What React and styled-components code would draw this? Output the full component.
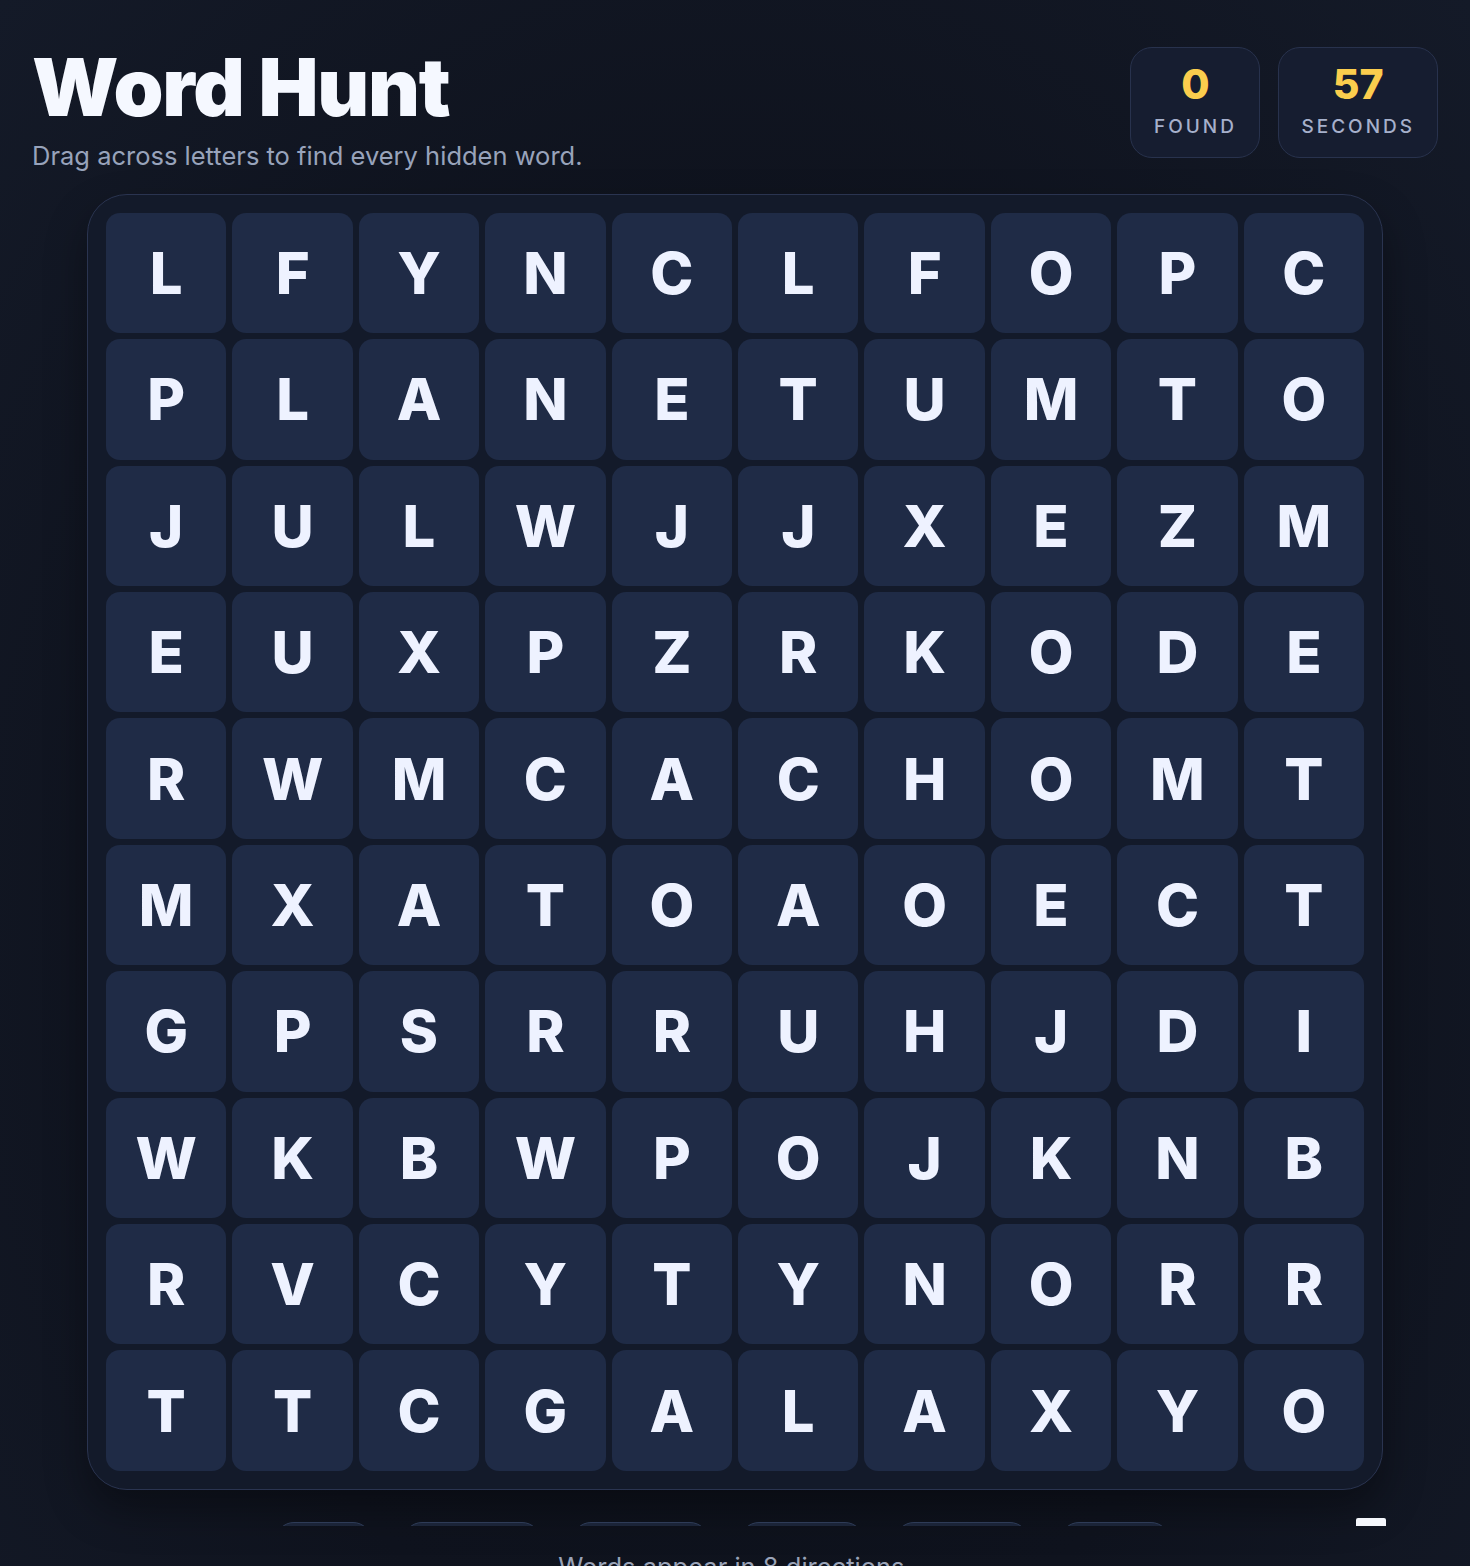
import React from "react";
import styled, { createGlobalStyle } from "styled-components";

const GlobalStyle = createGlobalStyle`
  * { box-sizing: border-box; }
  html, body { margin: 0; padding: 0; }
  body {
    background: radial-gradient(ellipse at 50% 60%, #0c1019 0%, #0f131e 55%, #141a28 100%);
    background-color: #0f131e;
    min-height: 1566px;
    font-family: Inter, "Noto Sans", sans-serif;
    color: #f1f5ff;
    overflow: hidden;
  }
`;

const Page = styled.div`
  padding: 47px 32px 0 32px;
  display: flex;
  flex-direction: column;
`;

const Header = styled.header`
  display: flex;
  justify-content: space-between;
  align-items: flex-start;
`;

const TitleBlock = styled.div`
  display: flex;
  flex-direction: column;
`;

const Title = styled.h1`
  margin: 0;
  font-size: 80px;
  line-height: 1;
  font-weight: 900;
  letter-spacing: -1.2px;
  color: #f5f8ff;
`;

const Subtitle = styled.p`
  margin: 11px 0 0 0;
  font-size: 25.5px;
  line-height: 1.4;
  color: #98a3bb;
  font-weight: 400;
`;

const Stats = styled.div`
  display: flex;
  gap: 18px;
`;

const StatBox = styled.div`
  display: flex;
  flex-direction: column;
  align-items: center;
  padding: 14px 22px 18px;
  background: #161d30;
  border: 1.5px solid #28324d;
  border-radius: 22px;
  min-width: 130px;
  height: 111px;
`;

const StatValue = styled.div`
  font-size: 41px;
  line-height: 1.1;
  font-weight: 800;
  color: #fbcd4d;
`;

const StatLabel = styled.div`
  margin-top: 8px;
  font-size: 19px;
  line-height: 1.3;
  letter-spacing: 3px;
  color: #a6b0cb;
  font-weight: 500;
`;

const Board = styled.div`
  margin: 20px auto 0;
  width: 1296px;
  padding: 18px;
  background: #131a2a;
  border: 1.5px solid #2a3450;
  border-radius: 40px;
  box-shadow: 0 20px 40px rgba(0, 0, 0, 0.35);
  display: grid;
  grid-template-columns: repeat(10, 1fr);
  gap: 6px;
`;

const Cell = styled.div`
  aspect-ratio: 1 / 1;
  display: flex;
  align-items: center;
  justify-content: center;
  background: #1f2b46;
  border-radius: 14px;
  font-size: 58px;
  font-weight: 800;
  color: #eef2ff;
  user-select: none;
`;

const WordRow = styled.div`
  margin-top: 28px;
  height: 8px;
  overflow: hidden;
  display: flex;
  align-items: flex-start;
  padding-left: 243px;
`;

const Chips = styled.div`
  display: flex;
  gap: 31px;
  margin-top: 4px;
`;

const Chip = styled.div`
  height: 38px;
  padding: 0 16px;
  border-radius: 999px;
  background: #1b2438;
  border: 1.5px solid #2e3b57;
  display: flex;
  align-items: center;
  font-size: 16px;
  font-weight: 600;
  letter-spacing: 1px;
  color: #cfd7ea;
  width: ${(p) => p.$w}px;
`;

const ResetButton = styled.button`
  margin-left: auto;
  margin-right: 52px;
  width: 30px;
  height: 44px;
  border: none;
  padding: 0;
  background: #f5f7fc;
  border-radius: 2px;
`;

const Hint = styled.p`
  margin: 22px 0 0 0;
  text-align: center;
  font-size: 25.5px;
  line-height: 1.5;
  color: #9aa3b8;
`;

const grid = [
  "LFYNCLFOPC",
  "PLANETUMTO",
  "JULWJJXEZM",
  "EUXPZRKODE",
  "RWMCACHOMT",
  "MXATOAOECT",
  "GPSRRUHJDI",
  "WKBWPOJKNB",
  "RVCYTYNORR",
  "TTCGALAXYO",
];

const words = [
  { w: "COMET", width: 97 },
  { w: "ASTEROID", width: 138 },
  { w: "MERCURY", width: 137 },
  { w: "PLANET", width: 124 },
  { w: "NEPTUNE", width: 134 },
  { w: "GALAXY", width: 110 },
];

export default function App() {
  return (
    <>
      <GlobalStyle />
      <Page>
        <Header>
          <TitleBlock>
            <Title>Word Hunt</Title>
            <Subtitle>Drag across letters to find every hidden word.</Subtitle>
          </TitleBlock>
          <Stats>
            <StatBox>
              <StatValue>0</StatValue>
              <StatLabel>FOUND</StatLabel>
            </StatBox>
            <StatBox>
              <StatValue>57</StatValue>
              <StatLabel>SECONDS</StatLabel>
            </StatBox>
          </Stats>
        </Header>
        <Board>
          {grid.map((row, r) =>
            row.split("").map((ch, c) => <Cell key={`${r}-${c}`}>{ch}</Cell>)
          )}
        </Board>
        <WordRow>
          <Chips>
            {words.map((x) => (
              <Chip key={x.w} $w={x.width}>
                {x.w}
              </Chip>
            ))}
          </Chips>
          <ResetButton aria-label="New game" />
        </WordRow>
        <Hint>Words appear in 8 directions.</Hint>
      </Page>
    </>
  );
}
